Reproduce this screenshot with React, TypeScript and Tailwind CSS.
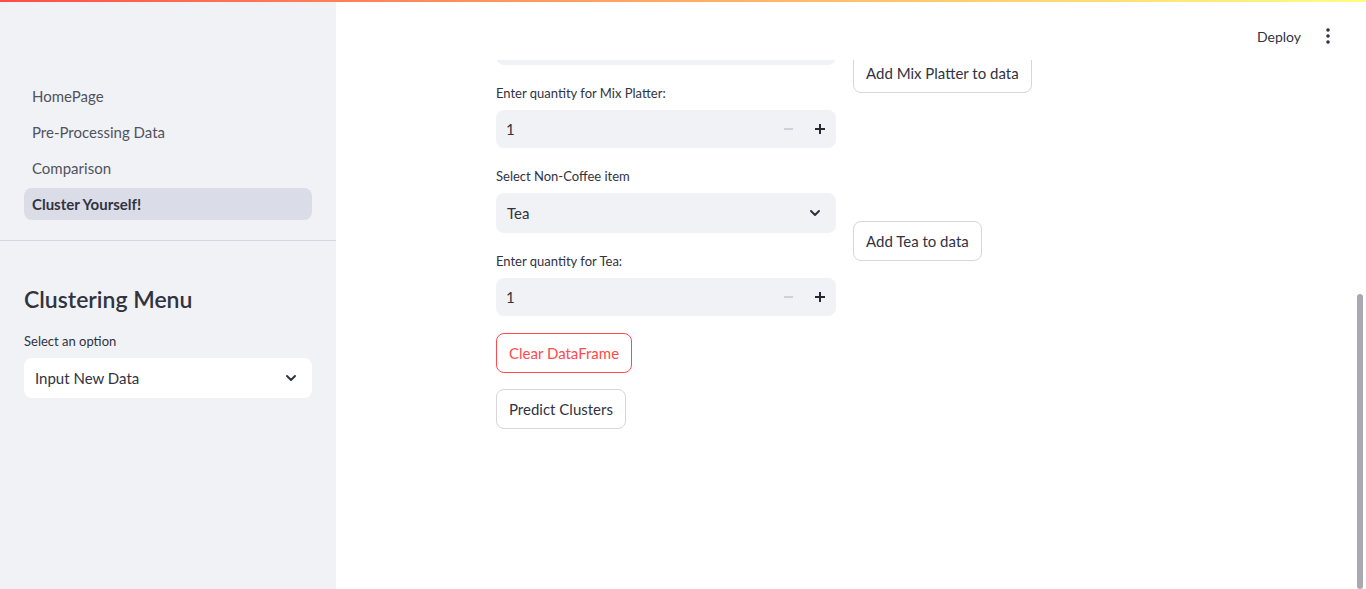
import { ChevronDown } from "lucide-react"

const font = { fontFamily: "Lato, 'Liberation Sans', sans-serif" }

const labelCls = "h-[29px] pb-1 flex items-center text-[13px] text-[#31333f]"
const btnCls =
  "h-10 px-3 rounded-lg border bg-white text-[15px] leading-none flex items-center whitespace-nowrap"

function SelectBox({ value, white }: { value: string; white?: boolean }) {
  return (
    <div
      className={`h-10 rounded-lg flex items-center justify-between pl-[11px] pr-[13px] text-[15px] text-[#31333f] ${
        white ? "bg-white" : "bg-[#f0f2f6]"
      }`}
    >
      <span>{value}</span>
      <ChevronDown size={16} strokeWidth={3} className="text-[#31333f]" />
    </div>
  )
}

function NumberInput({ value }: { value: number }) {
  return (
    <div className="h-[38px] rounded-lg bg-[#f0f2f6] flex items-center text-[15px] text-[#31333f]">
      <span className="flex-1 pl-[10px]">{value}</span>
      <div className="w-8 h-full flex items-center justify-center">
        <div className="w-[9px] h-[2px] bg-[#cfd1d8]" />
      </div>
      <div className="w-8 h-full flex items-center justify-center">
        <svg width="10" height="10" viewBox="0 0 10 10">
          <rect x="4" y="0" width="2" height="10" fill="#262730" />
          <rect x="0" y="4" width="10" height="2" fill="#262730" />
        </svg>
      </div>
    </div>
  )
}

function ItemRow({ select, item, selectLabel }: { select: string; item: string; selectLabel: string }) {
  return (
    <div className="grid grid-cols-[340px_1fr] gap-[17px]">
      <div className="flex flex-col">
        <div className={labelCls}>{selectLabel}</div>
        <SelectBox value={select} />
        <div className={`${labelCls} mt-4`}>Enter quantity for {item}:</div>
        <NumberInput value={1} />
      </div>
      <div className="pt-[57px]">
        <button className={`${btnCls} border-[#d6d6d9] text-[#31333f]`}>Add {item} to data</button>
      </div>
    </div>
  )
}

export default function App() {
  const nav = ["HomePage", "Pre-Processing Data", "Comparison", "Cluster Yourself!"]

  return (
    <div className="relative w-[1366px] h-[589px] overflow-hidden bg-white flex" style={font}>
      <div className="absolute top-0 left-0 right-0 h-[2px] bg-gradient-to-r from-[#ff4b4b] to-[#fffd80] z-20" />

      {/* Sidebar */}
      <aside className="w-[336px] shrink-0 h-full bg-[#f0f2f6] flex flex-col">
        <nav className="pt-[80px] px-6 pb-5 flex flex-col gap-1 border-b border-[#d5d8de]">
          {nav.map((n, i) => (
            <div
              key={n}
              className={`h-8 px-2 rounded-lg flex items-center text-[15px] ${
                i === 3 ? "bg-[#dadde7] font-bold text-[#31333f]" : "text-[#51535f]"
              }`}
            >
              {n}
            </div>
          ))}
        </nav>
        <div className="px-6 pt-[47px]">
          <h2 className="text-[23px] font-semibold text-[#31333f] leading-none">Clustering Menu</h2>
          <div className="mt-[19px] h-[27px] pb-1 flex items-center text-[13px] text-[#31333f]">Select an option</div>
          <div className="mt-px">
            <SelectBox value="Input New Data" white />
          </div>
        </div>
      </aside>

      {/* Main */}
      <main className="flex-1 h-full flex flex-col relative">
        <header className="h-[60px] shrink-0 bg-white flex items-center justify-end pr-[36px] gap-[25px] z-10">
          <span className="text-[14px] text-[#31333f] pt-[13px]">Deploy</span>
          <svg width="4" height="16" viewBox="0 0 4 16" className="mt-[12px]">
            <circle cx="2" cy="2" r="1.8" fill="#31333f" />
            <circle cx="2" cy="8" r="1.8" fill="#31333f" />
            <circle cx="2" cy="14" r="1.8" fill="#31333f" />
          </svg>
        </header>
        <div className="flex-1 overflow-hidden">
          <div className="w-[710px] mx-auto -mt-[64px] flex flex-col">
            {/* first row: its label and select sit mostly under the header */}
            <ItemRow selectLabel="" select="" item="Mix Platter" />
            <div className="mt-4">
              <ItemRow selectLabel="Select Non-Coffee item" select="Tea" item="Tea" />
            </div>
            <div className="mt-[17px] flex">
              <button className={`${btnCls} border-[#ff4b4b] text-[#ff4b4b]`}>Clear DataFrame</button>
            </div>
            <div className="mt-4 flex">
              <button className={`${btnCls} border-[#d6d6d9] text-[#31333f]`}>Predict Clusters</button>
            </div>
          </div>
        </div>
        <div className="absolute right-[3px] top-[294px] bottom-0 w-[6px] rounded-full bg-[#a9a9b1]" />
      </main>
    </div>
  )
}
